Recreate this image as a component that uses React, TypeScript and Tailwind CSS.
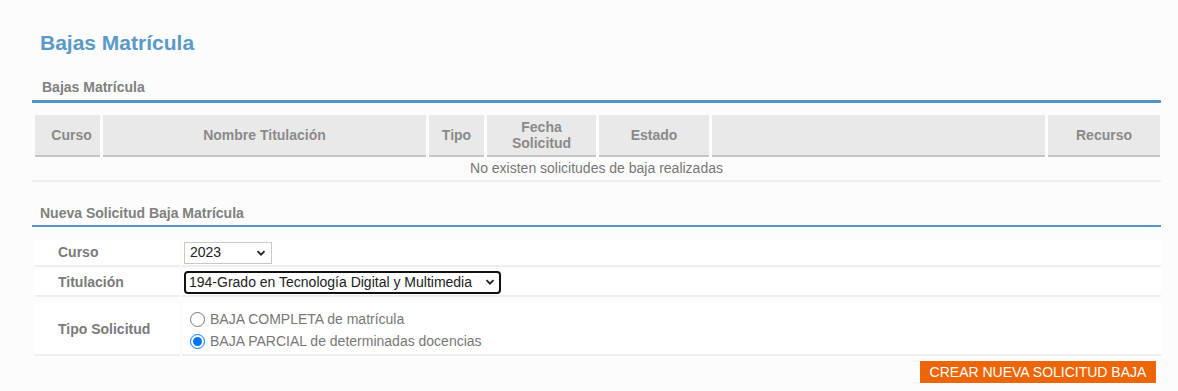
import React from 'react';

const font = { fontFamily: '"Liberation Sans", Arial, sans-serif' };

function SectionHeader({ title, line, pad }: { title: string; line: string; pad: string }) {
  return (
    <div className={`${line} border-[#5896c2] ${pad}`}>
      <h2 className="text-[14px] leading-[16px] font-bold text-[#808080]">{title}</h2>
    </div>
  );
}

function Chevron() {
  return (
    <svg width="10" height="10" viewBox="0 0 10 10" className="shrink-0">
      <path d="M1.5 3.2 L5 6.7 L8.5 3.2" fill="none" stroke="#222" strokeWidth="1.8" />
    </svg>
  );
}

function FormRow({ label, h, children }: { label: string; h: string; children: React.ReactNode }) {
  return (
    <div className={`flex gap-[2px] ${h}`}>
      <div className="w-[145px] bg-white border-b-2 border-[#eeeeee] flex items-center pl-[23px] text-[14px] font-bold text-[#7a7a7a]">
        {label}
      </div>
      <div className="flex-1 bg-white border-b-2 border-[#eeeeee] flex items-center pl-[2px]">{children}</div>
    </div>
  );
}

export default function App() {
  const cols = [
    { t: 'Curso', w: 'w-[65px] pl-[8px]' },
    { t: 'Nombre Titulación', w: 'w-[323px]' },
    { t: 'Tipo', w: 'w-[55px]' },
    { t: 'Fecha\nSolicitud', w: 'w-[109px]' },
    { t: 'Estado', w: 'w-[110px]' },
    { t: '', w: 'flex-1' },
    { t: 'Recurso', w: 'w-[112px]' },
  ];

  return (
    <div className="min-h-screen w-[1178px] h-[391px] bg-[#fcfcfc] overflow-hidden" style={font}>
      <div className="ml-[32px] w-[1129px] pt-[31px]">
        <h1 className="pl-[8px] text-[21px] leading-[24px] font-bold text-[#5a9ac6]">Bajas Matrícula</h1>

        <div className="mt-[24px]">
          <SectionHeader title="Bajas Matrícula" line="border-b-[3px]" pad="pl-[10px] pb-[5px]" />
        </div>

        <div className="mt-[12px] ml-[3px] w-[1125px] flex gap-[3px]">
          {cols.map((c, i) => (
            <div
              key={i}
              className={`${c.w} h-[42px] bg-[#e9e9e9] border-b-2 border-[#c6c6c6] flex items-center justify-center text-center whitespace-pre-line text-[14px] leading-[16px] font-bold text-[#8a8a8a]`}
            >
              {c.t}
            </div>
          ))}
        </div>
        <div className="h-[25px] border-b-2 border-[#eeeeee] flex items-center justify-center text-[14px] text-[#777777]">
          No existen solicitudes de baja realizadas
        </div>

        <div className="mt-[23px]">
          <SectionHeader title="Nueva Solicitud Baja Matrícula" line="border-b-2" pad="pl-[8px] pb-[4px]" />
        </div>

        <div className="mt-[13px] ml-[3px] flex flex-col gap-[2px]">
          <FormRow label="Curso" h="h-[27px]">
            <div className="w-[88px] h-[22px] border border-[#c8c8c8] bg-white flex items-center justify-between pl-[5px] pr-[5px] text-[14px] text-[#222]">
              <span>2023</span>
              <Chevron />
            </div>
          </FormRow>
          <FormRow label="Titulación" h="h-[28px]">
            <div className="w-[317px] h-[23px] border-2 border-[#111] rounded-[4px] bg-white flex items-center justify-between pl-[3px] pr-[4px] text-[14px] text-[#222]">
              <span>194-Grado en Tecnología Digital y Multimedia</span>
              <Chevron />
            </div>
          </FormRow>
          <div className="h-[3px]" />
          <FormRow label="Tipo Solicitud" h="h-[52px]">
            <div className="flex flex-col gap-[6px] pt-[2px] text-[14px] leading-[16px] text-[#777777]">
              <label className="flex items-center gap-[5px] ml-[6px]">
                <input type="radio" name="tipo" className="m-0 w-[15px] h-[15px]" />
                <span>BAJA COMPLETA de matrícula</span>
              </label>
              <label className="flex items-center gap-[5px] ml-[6px]">
                <input type="radio" name="tipo" defaultChecked className="m-0 w-[15px] h-[15px]" />
                <span>BAJA PARCIAL de determinadas docencias</span>
              </label>
            </div>
          </FormRow>
        </div>

        <div className="flex justify-end mt-[5px] pr-[5px]">
          <button className="w-[236px] h-[22px] bg-[#ec6608] text-white text-[14px] leading-[22px] text-center">
            CREAR NUEVA SOLICITUD BAJA
          </button>
        </div>
      </div>
    </div>
  );
}
